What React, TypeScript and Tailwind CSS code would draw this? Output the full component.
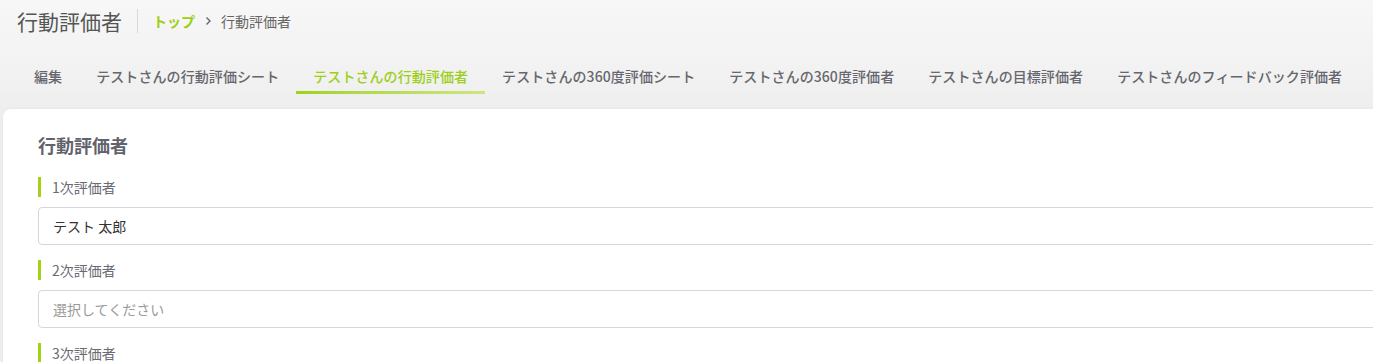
import { useState } from 'react';

const TABS = [
  '編集',
  'テストさんの行動評価シート',
  'テストさんの行動評価者',
  'テストさんの360度評価シート',
  'テストさんの360度評価者',
  'テストさんの目標評価者',
  'テストさんのフィードバック評価者',
];

const EVALUATORS = [
  { label: '1次評価者', value: 'テスト 太郎' },
  { label: '2次評価者', value: '' },
  { label: '3次評価者', value: '' },
];

export default function App() {
  const [active, setActive] = useState(2);

  return (
    <div className="min-h-screen overflow-hidden bg-[#efefef] font-['Noto_Sans_CJK_JP','Noto_Sans',sans-serif]">
      {/* Header */}
      <header className="bg-gradient-to-b from-[#f7f7f7] to-[#f0f0f0] pt-[5px]">
        <div className="flex h-[32px] items-center pl-[17px]">
          <h1 className="text-[21px] leading-[32px] text-[#555]">行動評価者</h1>
          <span className="mx-[15px] h-[24px] w-px bg-[#d9d9d9]" />
          <nav className="flex items-center text-[14px]">
            <a className="font-semibold text-[#9dcf18]">トップ</a>
            <svg className="mx-[8px] h-[10px] w-[10px] text-[#666]" viewBox="0 0 10 10" fill="none">
              <path d="M3.5 1.5 7 5l-3.5 3.5" stroke="currentColor" strokeWidth="1.4" />
            </svg>
            <span className="text-[#666]">行動評価者</span>
          </nav>
        </div>

        {/* Tabs */}
        <div className="mt-[19px] flex pl-[17px]">
          {TABS.map((tab, i) => (
            <button
              key={tab}
              onClick={() => setActive(i)}
              className="flex flex-col items-stretch pt-[10px] text-[14px] font-medium leading-[20px] tracking-[0.08px]"
            >
              <span className={`px-[17px] ${i === active ? 'text-[#9dcf18]' : 'text-[#66666e]'}`}>{tab}</span>
              <span
                className={`mt-[5px] h-[3px] ${
                  i === active ? 'bg-gradient-to-r from-[#a3d212] to-[#cce67f]' : 'bg-transparent'
                }`}
              />
            </button>
          ))}
        </div>
      </header>

      {/* Card */}
      <main className="pl-[3px] pt-[15px]">
        <section className="w-[1440px] rounded-tl-lg bg-white pl-[35px] pt-[23px] pb-[20px] shadow-[0_0_4px_rgba(0,0,0,0.05)]">
          <h2 className="text-[18px] font-semibold leading-[26px] text-[#62626c]">行動評価者</h2>

          <div className="mt-[19px] flex flex-col">
            {EVALUATORS.map((ev, i) => (
              <div key={ev.label} className={i === 0 ? '' : 'mt-[15px]'}>
                <div className="flex items-center">
                  <span className="h-[20px] w-[3px] bg-[#a3d212]" />
                  <span className="ml-[11px] text-[14px] leading-[20px] text-[#6a6a72]">{ev.label}</span>
                </div>
                <div className="mt-[10px] flex h-[38px] items-center rounded-[4px] border border-[#d6d6de] px-[14px] text-[14px]">
                  {ev.value ? (
                    <span className="text-[#333]">{ev.value}</span>
                  ) : (
                    <span className="text-[#9a9a9a]">選択してください</span>
                  )}
                </div>
              </div>
            ))}
          </div>
        </section>
      </main>
    </div>
  );
}
